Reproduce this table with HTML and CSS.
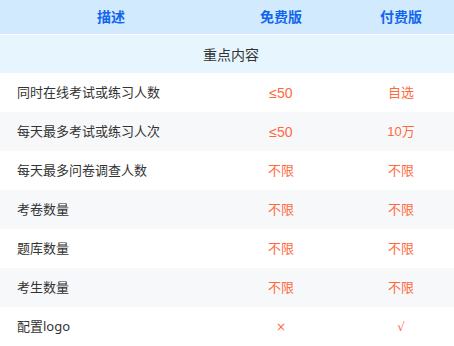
FILE: index.html
```html
<!DOCTYPE html>
<html lang="zh">
<head>
<meta charset="utf-8">
<link rel="stylesheet" href="styles.css">
</head>
<body>
<div class="table">
  <div class="row head">
    <div class="cell">描述</div>
    <div class="cell">免费版</div>
    <div class="cell">付费版</div>
  </div>
  <div class="section">重点内容</div>
  <div class="row">
    <div class="cell desc">同时在线考试或练习人数</div>
    <div class="cell val num">≤50</div>
    <div class="cell val">自选</div>
  </div>
  <div class="row alt">
    <div class="cell desc">每天最多考试或练习人次</div>
    <div class="cell val num">≤50</div>
    <div class="cell val">10万</div>
  </div>
  <div class="row">
    <div class="cell desc">每天最多问卷调查人数</div>
    <div class="cell val">不限</div>
    <div class="cell val">不限</div>
  </div>
  <div class="row alt">
    <div class="cell desc">考卷数量</div>
    <div class="cell val">不限</div>
    <div class="cell val">不限</div>
  </div>
  <div class="row">
    <div class="cell desc">题库数量</div>
    <div class="cell val">不限</div>
    <div class="cell val">不限</div>
  </div>
  <div class="row alt">
    <div class="cell desc">考生数量</div>
    <div class="cell val">不限</div>
    <div class="cell val">不限</div>
  </div>
  <div class="row">
    <div class="cell desc">配置logo</div>
    <div class="cell val small">×</div>
    <div class="cell val small">√</div>
  </div>
</div>
</body>
</html>
```

FILE: styles.css
```css
html, body {
  margin: 0;
  padding: 0;
  background: #ffffff;
  overflow: hidden;
}
body {
  width: 454px;
  height: 346px;
  font-family: "Noto Sans", "Noto Sans CJK SC", sans-serif;
  color: #333333;
}
.table {
  width: 462px;
  display: flex;
  flex-direction: column;
}
.row {
  display: grid;
  grid-template-columns: 222px 118px 122px;
  height: 39px;
  align-items: center;
  font-size: 13px;
}
.row.alt {
  background: #f7f8fa;
}
.head {
  height: 34px;
  background: #d1eafd;
  font-size: 14px;
  font-weight: bold;
  color: #1166ee;
  border-bottom: 1px solid #ffffff;
}
.head .cell {
  text-align: center;
}
.section {
  height: 38px;
  background: #e7f5fe;
  display: flex;
  align-items: center;
  justify-content: center;
  font-size: 14px;
  color: #333333;
}
.cell {
  line-height: 1;
}
.desc {
  padding-left: 17px;
  color: #333333;
}
.val {
  text-align: center;
  color: #ff6a3d;
  font-family: "Liberation Sans", "Noto Sans CJK SC", sans-serif;
  font-size: 13px;
}
.val.num {
  font-size: 14px;
}
.small {
  font-size: 12px;
  font-family: "DejaVu Sans", "Noto Sans", sans-serif;
}
```
